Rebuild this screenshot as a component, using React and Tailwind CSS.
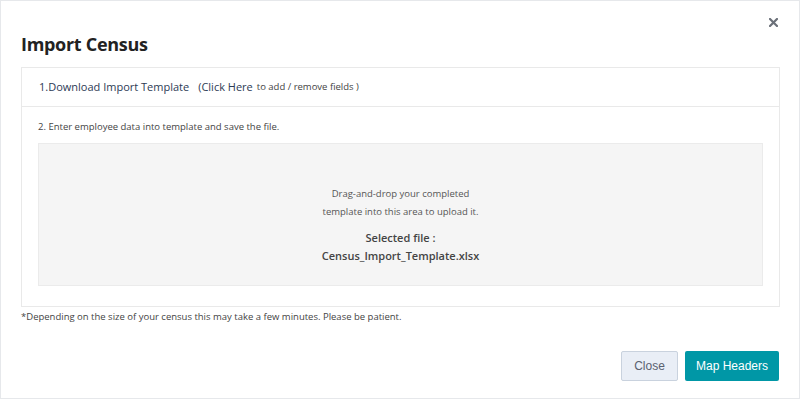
export default function App() {
  return (
    <div className="w-[801px] h-[399px] bg-white overflow-hidden" style={{ fontFamily: '"Open Sans", sans-serif' }}>
      <div className="h-full w-[800px] border border-[#e6e8eb] bg-white relative">
        <button className="absolute right-[21px] top-[17px] leading-none">
          <svg width="9" height="9" viewBox="0 0 9 9">
            <path d="M1 1L8 8M8 1L1 8" stroke="#6b7079" strokeWidth="2.2" strokeLinecap="square" />
          </svg>
        </button>

        <div className="px-[20px] pt-[30px]">
          <h2 className="text-[18px] font-bold text-[#222] leading-[26px] tracking-[-0.3px]">Import Census</h2>

          <div className="mt-[10px] border border-[#e9e9e9] w-[759px]">
            <div className="h-[39px] flex items-center px-[17px] border-b border-[#e9e9e9] text-[11px] text-[#2d3b55]">
              <span>1.Download Import Template</span>
              <span className="ml-[9px]">(Click Here</span>
              <span className="ml-[4px] text-[9.5px] text-[#444]">to add / remove fields )</span>
            </div>
            <div className="px-[16px] pt-[13px] pb-[20px]">
              <p className="text-[9.5px] text-[#444] leading-[14px]">2. Enter employee data into template and save the file.</p>
              <div className="mt-[9px] h-[143px] bg-[#f5f5f5] border border-[#ebebeb] flex flex-col items-center justify-center text-center pt-[20px]">
                <p className="text-[9.5px] text-[#555] leading-[18px]">Drag-and-drop your completed</p>
                <p className="text-[9.5px] text-[#555] leading-[18px]">template into this area to upload it.</p>
                <p className="mt-[8px] text-[11px] font-semibold text-[#444] leading-[18px]">Selected file :</p>
                <p className="text-[11px] font-semibold text-[#444] leading-[18px]">Census_Import_Template.xlsx</p>
              </div>
            </div>
          </div>

          <p className="mt-[3px] text-[9.5px] text-[#444] leading-[14px]">*Depending on the size of your census this may take a few minutes. Please be patient.</p>

          <div className="mt-[27px] flex justify-end gap-[7px]" style={{ fontFamily: '"Liberation Sans", Arial, sans-serif' }}>
            <button className="h-[30px] w-[57px] rounded-[2px] bg-[#e9eef6] border border-[#c9d2de] text-[12px] text-[#5a6170]">Close</button>
            <button className="h-[30px] w-[94px] rounded-[2px] bg-[#0097a6] text-[12px] text-white">Map Headers</button>
          </div>
        </div>
      </div>
    </div>
  );
}
